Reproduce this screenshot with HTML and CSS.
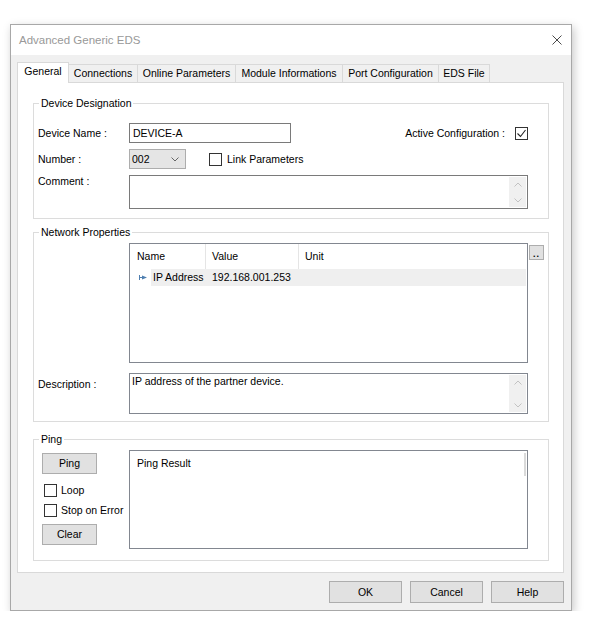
FILE: index.html
```html
<!DOCTYPE html>
<html lang="en">
<head>
	<meta charset="UTF-8">
	<meta name="viewport" content="width=device-width, initial-scale=1.0">
	<title>Advanced Generic EDS</title>
	<link rel="stylesheet" href="styles.css">
</head>
<body>

	<div class="window">

		<div class="titlebar">
			<span class="title">Advanced Generic EDS</span>
			<svg class="close" width="10" height="10" viewBox="0 0 10 10">
				<path d="M0.5 0.5 L9.5 9.5 M9.5 0.5 L0.5 9.5" stroke="#4a4a4a" stroke-width="1" fill="none"/>
			</svg>
		</div>

		<div class="client">

			<div class="tabs">
				<div class="tab active tab-general">General</div>
				<div class="tab tab-connections">Connections</div>
				<div class="tab tab-online">Online Parameters</div>
				<div class="tab tab-module">Module Informations</div>
				<div class="tab tab-port">Port Configuration</div>
				<div class="tab tab-eds">EDS File</div>
			</div>

			<div class="panel">

				<!-- Device Designation -->
				<fieldset class="group group-device">
					<legend>Device Designation</legend>
					<div class="gbody">
						<div class="row">
							<span class="lbl">Device Name :</span>
							<div class="edit edit-name">DEVICE-A</div>
							<div class="active-cfg">
								<span>Active Configuration :</span>
								<span class="check">
									<svg width="11" height="11" viewBox="0 0 11 11">
										<path d="M1.5 5.5 L4.5 8.5 L9.5 2" stroke="#222" stroke-width="1.1" fill="none"/>
									</svg>
								</span>
							</div>
						</div>
						<div class="row row-number">
							<span class="lbl">Number :</span>
							<div class="combo">
								<span>002</span>
								<svg width="8" height="5" viewBox="0 0 8 5">
									<path d="M0.5 0.5 L4 4 L7.5 0.5" stroke="#666" stroke-width="1" fill="none"/>
								</svg>
							</div>
							<label class="cb cb-link"><span class="check"></span>Link Parameters</label>
						</div>
						<div class="row row-top row-comment">
							<span class="lbl">Comment :</span>
							<div class="memo memo-comment">
								<div class="memo-text"></div>
								<div class="vscroll">
									<svg width="8" height="5" viewBox="0 0 8 5"><path d="M0.5 4.5 L4 1 L7.5 4.5" stroke="#c2c2c2" fill="none"/></svg>
									<svg width="8" height="5" viewBox="0 0 8 5"><path d="M0.5 0.5 L4 4 L7.5 0.5" stroke="#c2c2c2" fill="none"/></svg>
								</div>
							</div>
						</div>
					</div>
				</fieldset>

				<!-- Network Properties -->
				<fieldset class="group group-network">
					<legend>Network Properties</legend>
					<div class="gbody">
						<div class="row row-top">
							<span class="lbl"></span>
							<div class="listview">
								<div class="lv-head">
									<div class="lv-col col-name">Name</div>
									<div class="lv-col col-value">Value</div>
									<div class="lv-col col-unit">Unit</div>
								</div>
								<div class="lv-row">
									<div class="lv-icon">
										<svg width="8" height="5" viewBox="0 0 8 5">
											<rect x="0" y="0" width="1" height="5" fill="#4f7fb0"/>
											<rect x="1" y="2" width="3" height="1" fill="#4f7fb0"/>
											<path d="M3 0.5 L8 2.5 L3 4.5 Z" fill="#4f7fb0"/>
										</svg>
									</div>
									<div class="lv-band">
										<span class="cell-name">IP Address</span>
										<span class="cell-value">192.168.001.253</span>
									</div>
								</div>
							</div>
							<div class="dots-btn">..</div>
						</div>
						<div class="row row-top row-desc">
							<span class="lbl lbl-desc">Description :</span>
							<div class="memo memo-desc">
								<div class="memo-text">IP address of the partner device.</div>
								<div class="vscroll">
									<svg width="8" height="5" viewBox="0 0 8 5"><path d="M0.5 4.5 L4 1 L7.5 4.5" stroke="#c2c2c2" fill="none"/></svg>
									<svg width="8" height="5" viewBox="0 0 8 5"><path d="M0.5 0.5 L4 4 L7.5 0.5" stroke="#c2c2c2" fill="none"/></svg>
								</div>
							</div>
						</div>
					</div>
				</fieldset>

				<!-- Ping -->
				<fieldset class="group group-ping">
					<legend>Ping</legend>
					<div class="gbody">
						<div class="row row-top">
							<div class="ping-side">
								<div class="btn btn-small btn-ping">Ping</div>
								<label class="cb cb-loop"><span class="check"></span>Loop</label>
								<label class="cb cb-stop"><span class="check"></span>Stop on Error</label>
								<div class="btn btn-small btn-clear">Clear</div>
							</div>
							<div class="ping-result">
								<span>Ping Result</span>
								<div class="thumb"></div>
							</div>
						</div>
					</div>
				</fieldset>

			</div>

			<div class="buttons">
				<div class="btn">OK</div>
				<div class="btn">Cancel</div>
				<div class="btn">Help</div>
			</div>

		</div>

	</div>

</body>
</html>
```

FILE: styles.css
```css
* {
	margin: 0;
	padding: 0;
	box-sizing: border-box;
}

body {
	background-color: #fff;
	font-family: "Liberation Sans", Arial, sans-serif;
	font-size: 10.5px;
	color: #000;
}

.window {
	margin: 24px 0 0 10px;
	width: 562px;
	height: 587px;
	border: 1px solid #a8a8a8;
	background-color: #f0f0f0;
	box-shadow: 2px 3px 9px rgba(0, 0, 0, 0.22);
	display: flex;
	flex-direction: column;
}

.titlebar {
	height: 30px;
	background-color: #fff;
	display: flex;
	align-items: center;
	justify-content: space-between;
	padding: 0 9px 0 8px;
}

.title {
	font-size: 11.5px;
	color: #999;
}

.client {
	flex: 1;
	padding: 7px 7px 0 6px;
	display: flex;
	flex-direction: column;
}

/* tabs */

.tabs {
	display: flex;
	align-items: flex-end;
	height: 20px;
}

.tab {
	height: 18px;
	line-height: 17px;
	text-align: center;
	background-color: #f0f0f0;
	border-top: 1px solid #d9d9d9;
	border-right: 1px solid #d9d9d9;
	white-space: nowrap;
}

.tab.active {
	height: 21px;
	margin-bottom: -1px;
	background-color: #fff;
	border-left: 1px solid #d9d9d9;
	position: relative;
	z-index: 1;
}

.tab-general { width: 52px; }
.tab-connections { width: 69px; }
.tab-online { width: 98px; }
.tab-module { width: 107px; }
.tab-port { width: 96px; }
.tab-eds { width: 51px; }

.panel {
	height: 491px;
	background-color: #fff;
	border: 1px solid #d9d9d9;
	padding: 14px 14px 0 15px;
}

/* group boxes */

.group {
	border: 1px solid #dcdcdc;
	padding: 0;
	min-width: 0;
}

.group legend {
	margin-left: 5px;
	padding: 0 2px;
	line-height: 13px;
}

.group-network {
	margin-top: 7px;
}

.group-ping {
	margin-top: 11px;
}

.gbody {
	padding: 13px 20px 9px 4px;
}

.group-network .gbody {
	padding: 4px 0 7px 4px;
}

.group-ping .gbody {
	padding: 4px 20px 11px 4px;
}

.row {
	display: flex;
	align-items: center;
}

.row-top {
	align-items: flex-start;
}

.row-number,
.row-comment {
	margin-top: 6px;
}

.row-desc {
	margin-top: 10px;
}

.lbl {
	width: 91px;
	flex-shrink: 0;
	line-height: 13px;
}

.lbl-desc {
	margin-top: 5px;
}

/* inputs */

.edit {
	height: 20px;
	border: 1px solid #7a7a7a;
	padding: 0 3px;
	line-height: 18px;
}

.edit-name {
	width: 162px;
}

.active-cfg {
	margin-left: auto;
	display: flex;
	align-items: center;
	gap: 10px;
}

.check {
	width: 13px;
	height: 13px;
	border: 1px solid #333;
	background-color: #fff;
	display: inline-flex;
	align-items: center;
	justify-content: center;
	flex-shrink: 0;
}

.combo {
	width: 57px;
	height: 20px;
	background-color: #e5e5e5;
	border: 1px solid #adadad;
	display: flex;
	align-items: center;
	justify-content: space-between;
	padding: 0 6px 0 2px;
}

.cb {
	display: flex;
	align-items: center;
	gap: 5px;
	line-height: 13px;
	white-space: nowrap;
}

.cb-link {
	margin-left: 23px;
}

.memo {
	width: 399px;
	flex-shrink: 0;
	border: 1px solid #7a7a7a;
	display: flex;
	background-color: #fff;
}

.memo-comment {
	height: 34px;
}

.memo-desc {
	height: 41px;
	border-color: #828790;
}

.memo-text {
	flex: 1;
	padding: 1px 2px;
	line-height: 13px;
}

.vscroll {
	width: 17px;
	margin: 1px;
	background-color: #f0f0f0;
	display: flex;
	flex-direction: column;
	justify-content: space-between;
	align-items: center;
	padding: 5px 0 4px;
}

/* list view */

.listview {
	width: 399px;
	height: 120px;
	flex-shrink: 0;
	border: 1px solid #828790;
	background-color: #fff;
}

.lv-head {
	display: flex;
	height: 25px;
}

.lv-col {
	line-height: 25px;
	padding-left: 6px;
}

.col-name {
	width: 76px;
	padding-left: 7px;
	border-right: 1px solid #e5e5e5;
}

.col-value {
	width: 93px;
	border-right: 1px solid #e5e5e5;
}

.lv-row {
	display: flex;
	height: 17px;
}

.lv-icon {
	width: 21px;
	padding: 6px 0 0 9px;
}

.lv-icon svg {
	display: block;
}

.lv-band {
	flex: 1;
	margin-right: 1px;
	background-color: #efefef;
	display: flex;
	line-height: 17px;
}

.cell-name {
	width: 55px;
	padding-left: 2px;
	white-space: nowrap;
}

.cell-value {
	padding-left: 6px;
}

.dots-btn {
	width: 15px;
	height: 15px;
	margin: 2px 0 0 1px;
	background-color: #e1e1e1;
	border: 1px solid #adadad;
	font-size: 9px;
	font-weight: 700;
	line-height: 17px;
	text-align: center;
	letter-spacing: 1px;
}

/* ping */

.ping-side {
	width: 91px;
	flex-shrink: 0;
	padding-top: 3px;
}

.btn {
	height: 22px;
	width: 73px;
	background-color: #e1e1e1;
	border: 1px solid #adadad;
	text-align: center;
	line-height: 20px;
}

.btn-small {
	width: 55px;
	height: 21px;
	line-height: 19px;
	margin-left: 4px;
}

.cb-loop {
	margin: 10px 0 0 6px;
	gap: 4px;
}

.cb-stop {
	margin: 7px 0 0 6px;
	gap: 4px;
}

.btn-clear {
	margin-top: 7px;
}

.ping-result {
	width: 399px;
	height: 99px;
	flex-shrink: 0;
	border: 1px solid #828790;
	padding: 6px 7px;
	line-height: 13px;
	position: relative;
}

.ping-result .thumb {
	position: absolute;
	top: 2px;
	right: 1px;
	width: 2px;
	height: 23px;
	background-color: #dadada;
}

/* dialog buttons */

.buttons {
	margin-top: 8px;
	display: flex;
	justify-content: flex-end;
	gap: 8px;
}
```
